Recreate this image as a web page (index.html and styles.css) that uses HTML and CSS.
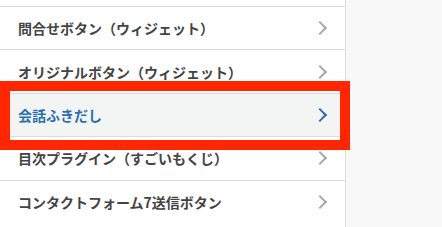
FILE: index.html
```html
<!DOCTYPE html>
<html lang="ja">
<head>
<meta charset="UTF-8">
<meta name="viewport" content="width=device-width, initial-scale=1.0">
<title>ブロック一覧</title>
<link rel="stylesheet" href="styles.css">
</head>
<body>

<div class="page">
    <nav class="panel">
        <ul class="menu">
            <li class="item"><a href="#">問合せボタン（ウィジェット）<span class="chev"></span></a></li>
            <li class="item"><a href="#">オリジナルボタン（ウィジェット）<span class="chev"></span></a></li>
            <li class="item active"><a href="#">会話ふきだし<span class="chev"></span></a></li>
            <li class="item"><a href="#">目次プラグイン（すごいもくじ）<span class="chev"></span></a></li>
            <li class="item"><a href="#">コンタクトフォーム7送信ボタン<span class="chev"></span></a></li>
        </ul>
    </nav>
    <div class="rest"></div>
    <!-- 強調枠 -->
    <div class="mark"></div>
</div>

</body>
</html>
```

FILE: styles.css
```css
body { margin: 0; font-family: "Noto Sans CJK JP", "Noto Sans", sans-serif; background: #f8f8f8; }
.page { position: relative; display: flex; height: 227px; overflow: hidden; }
.panel { width: 345px; background: #fff; border-right: 1px solid #dcdcdc; padding-top: 6px; }
.rest { flex: 1; }
.menu { list-style: none; margin: 0; padding: 0; }
.item { border-top: 1px solid #dcdcdc; }
.item a { display: flex; align-items: center; justify-content: space-between; height: 42.4px; padding: 0 20px 0 18px; color: #444; font-size: 14px; font-weight: bold; text-decoration: none; }
.chev { width: 8px; height: 8px; border-top: 2px solid #a8a8a8; border-right: 2px solid #a8a8a8; transform: rotate(45deg); }
.active a { background: #f3f5f5; color: #2a6fb3; }
.active .chev { border-color: #2a6fb3; }
.mark { position: absolute; left: 0; top: 81px; width: 330px; height: 49px; border: 10px solid #ff2600; }
```
